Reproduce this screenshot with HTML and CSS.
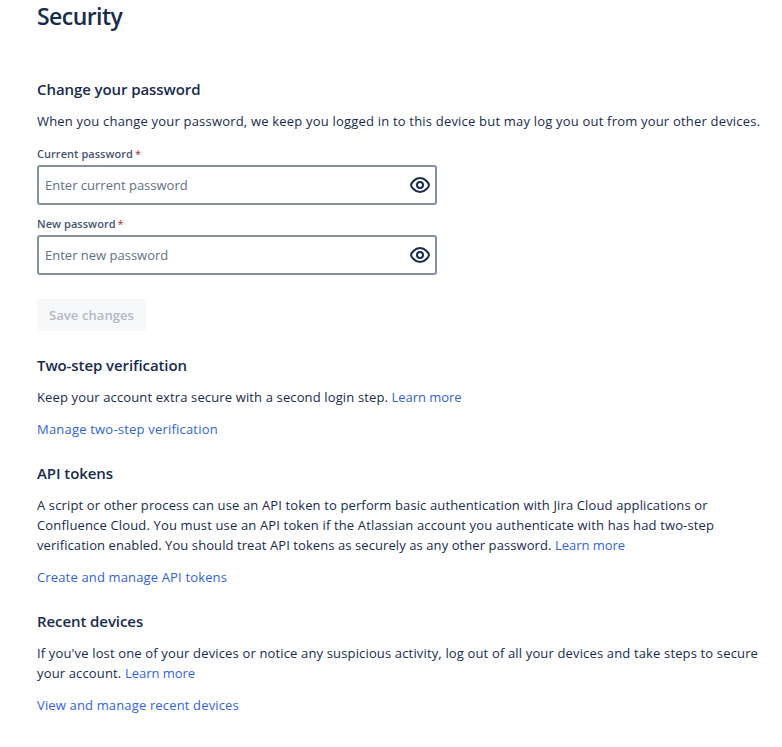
FILE: index.html
```html
<!DOCTYPE html>
<html lang="en">
<head>
<meta charset="utf-8">
<title>Security</title>
<link rel="stylesheet" href="styles.css">
</head>
<body>
<main class="page">
  <h1>Security</h1>
  <section class="password">
    <h2>Change your password</h2>
    <p class="intro">When you change your password, we keep you logged in to this device but may log you out from your other devices.</p>
    <form>
      <label for="current">Current password<span class="required">*</span></label>
      <div class="field">
        <input id="current" type="password" placeholder="Enter current password">
        <svg class="eye" viewBox="0 0 24 24" aria-hidden="true"><path d="M3 12C3 10.500 6.500 5 12 5S21 10.500 21 12 17.500 19 12 19 3 13.500 3 12Z"/><circle cx="12" cy="12" r="3"/></svg>
      </div>
      <label for="new">New password<span class="required">*</span></label>
      <div class="field">
        <input id="new" type="password" placeholder="Enter new password">
        <svg class="eye" viewBox="0 0 24 24" aria-hidden="true"><path d="M3 12C3 10.500 6.500 5 12 5S21 10.500 21 12 17.500 19 12 19 3 13.500 3 12Z"/><circle cx="12" cy="12" r="3"/></svg>
      </div>
      <button type="submit" disabled>Save changes</button>
    </form>
  </section>
  <section>
    <h2>Two-step verification</h2>
    <p><span class="snug">Keep your account extra secure with a second login step.</span> <a class="more" href="#">Learn more</a></p>
    <p><a class="manage" href="#">Manage two-step verification</a></p>
  </section>
  <section>
    <h2>API tokens</h2>
    <p><span class="snug">A script or other process can use an API token to perform basic authentication with Jira Cloud applications or</span><br>Confluence Cloud. You must use an API token if the Atlassian account you authenticate with has had two-step<br><span class="tight">verification enabled. You should treat API tokens as securely as any other password.</span> <a class="more" href="#">Learn more</a></p>
    <p><a href="#">Create and manage API tokens</a></p>
  </section>
  <section>
    <h2>Recent devices</h2>
    <p>If you've lost one of your devices or notice any suspicious activity, log out of all your devices and take steps to secure<br>your account. <a class="more" href="#">Learn more</a></p>
    <p><a href="#">View and manage recent devices</a></p>
  </section>
</main>
</body>
</html>
```
FILE: styles.css
```css
* { box-sizing: border-box; }
body { margin: 0; background: #fff; color: #172b4d; font: 13px/20px "Open Sans", sans-serif; }
.page { padding: 2px 0 0 37px; white-space: nowrap; }
h1 { margin: 0; font-size: 23px; line-height: 28px; font-weight: 600; letter-spacing: -0.55px; }
section { margin-top: 24px; }
.password { margin-top: 49px; }
h2 { margin: 0; font-size: 15px; line-height: 20px; font-weight: 600; letter-spacing: -0.08px; }
p { margin: 12px 0 0; letter-spacing: 0.15px; }
.intro { letter-spacing: 0.195px; }
.snug { letter-spacing: 0.13px; }
.tight { letter-spacing: 0.08px; }
.more { letter-spacing: -0.04px; }
.manage { letter-spacing: 0.2px; }
a { color: #2f63dc; text-decoration: none; }
form { margin-top: 10px; }
label { display: block; padding: 3px 0 1px; font-size: 11px; line-height: 20px; font-weight: 600; letter-spacing: 0.05px; color: #44546f; }
.required { padding-left: 2px; font-weight: 400; color: #ae2e24; }
.field { display: flex; align-items: center; width: 400px; height: 40px; margin-bottom: 6px; padding-right: 3px; border: 2px solid #8590a2; border-radius: 3px; }
input { flex: 1; padding: 0 6px; border: 0; outline: 0; font: inherit; }
input::placeholder { color: #626f86; }
.eye { width: 24px; height: 24px; fill: none; stroke: #172b4d; stroke-width: 2; }
button { display: block; width: 109px; height: 32px; margin-top: 24px; padding: 0 12px; border: 0; border-radius: 3px; background: #f7f8f9; color: #b3b9c4; font: 600 13px/32px "Open Sans", sans-serif; letter-spacing: 0.08px; }
```
